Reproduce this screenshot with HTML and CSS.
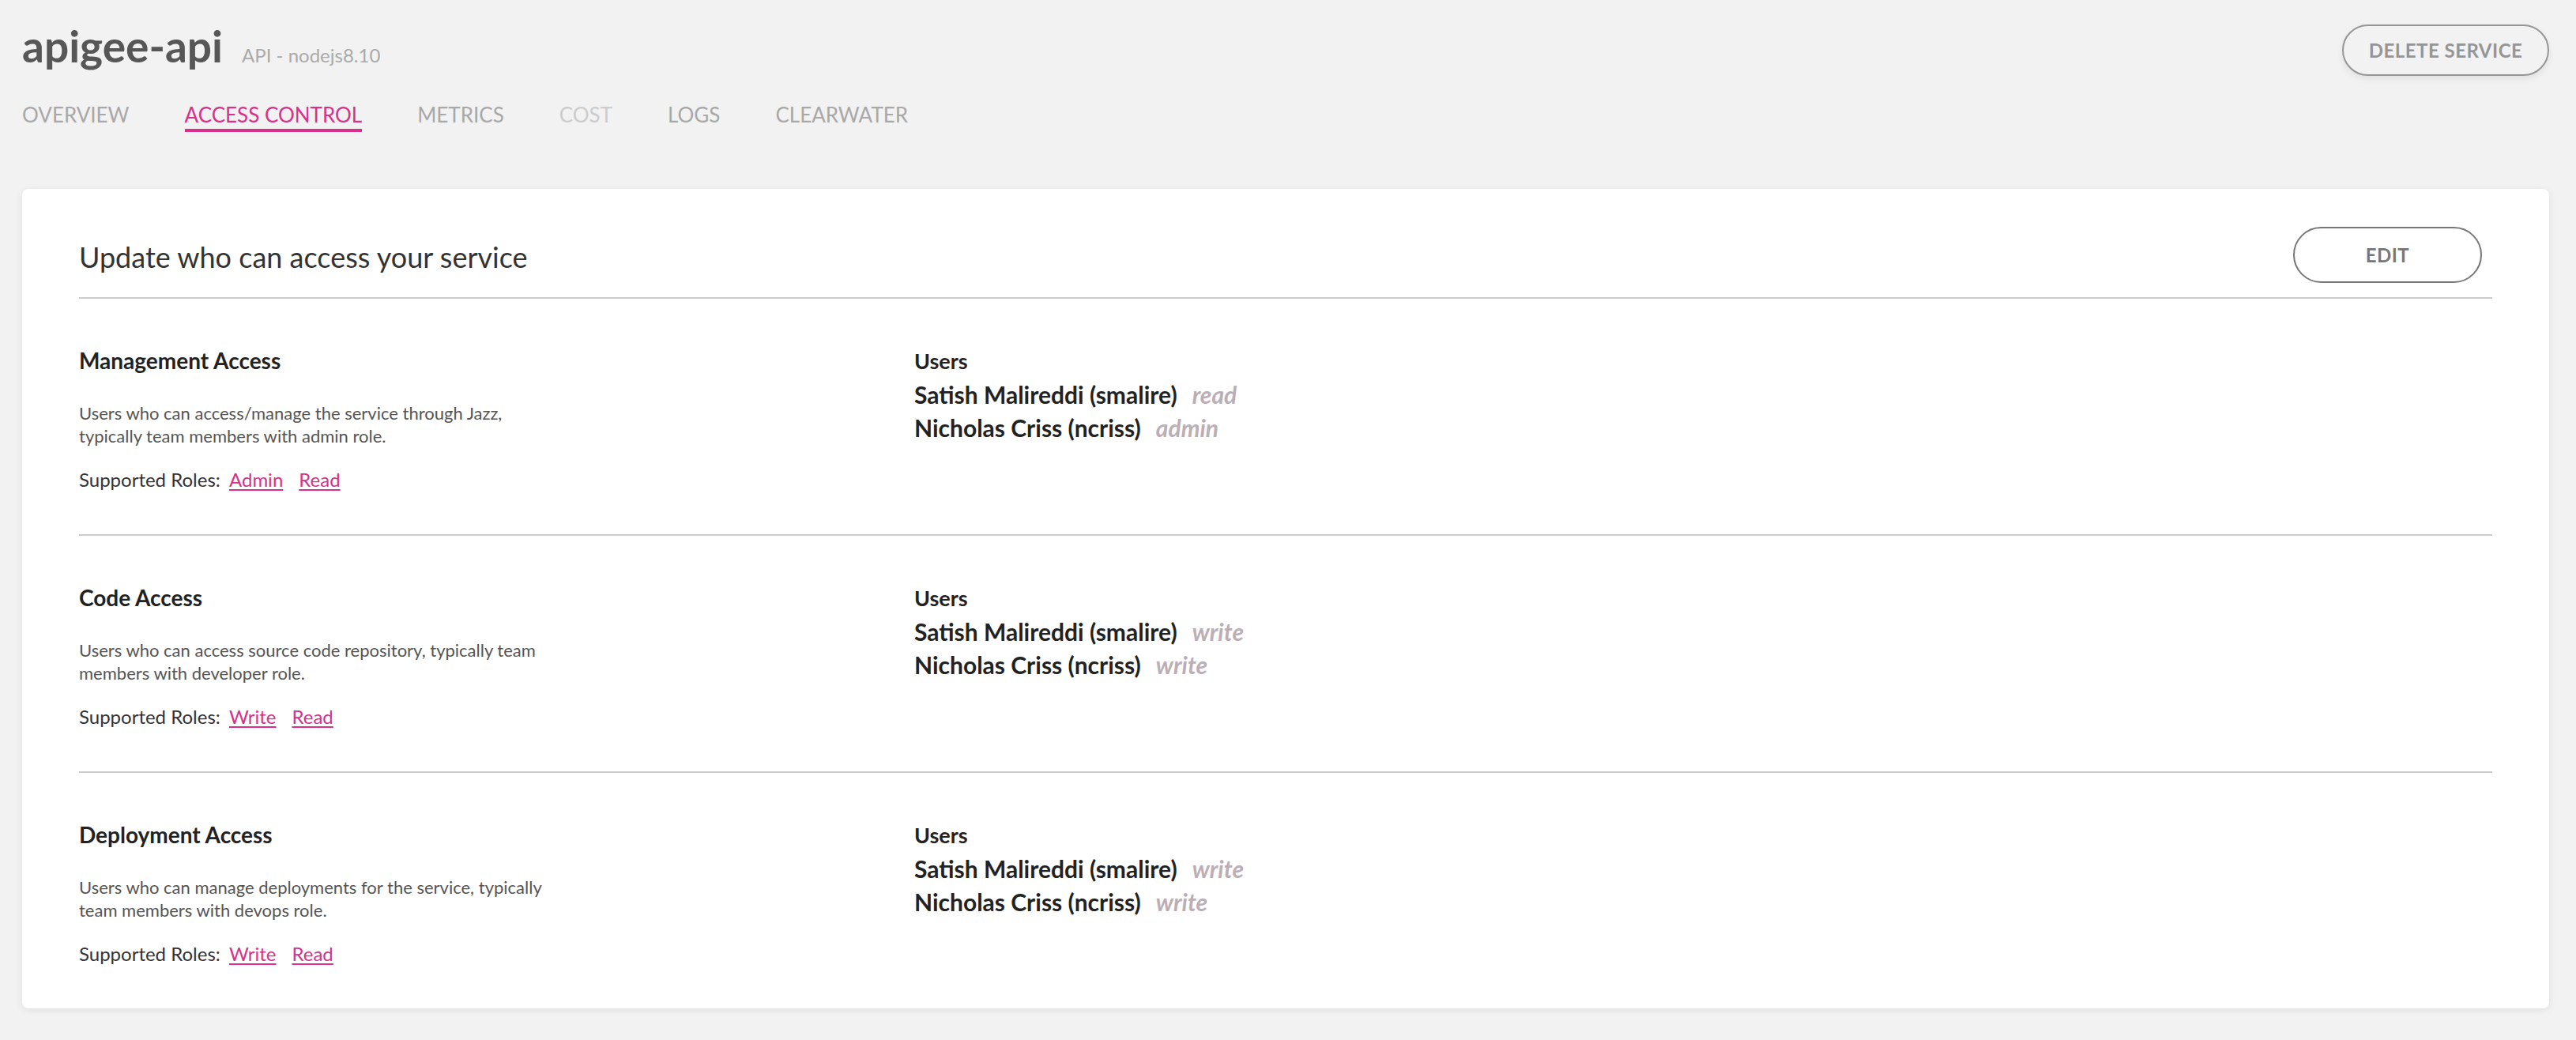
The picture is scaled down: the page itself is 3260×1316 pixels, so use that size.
FILE: index.html
```html
<!DOCTYPE html>
<html lang="en">
<head>
<meta charset="utf-8">
<title>apigee-api - Access Control</title>
<link rel="stylesheet" href="styles.css">
</head>
<body>
<div class="page">
  <header class="top">
    <div class="top-left">
      <div class="title-row">
        <h1 class="title">apigee-api</h1>
        <span class="subtitle">API - nodejs8.10</span>
      </div>
      <nav class="tabs">
        <span class="tab">OVERVIEW</span>
        <span class="tab active">ACCESS CONTROL</span>
        <span class="tab">METRICS</span>
        <span class="tab disabled">COST</span>
        <span class="tab">LOGS</span>
        <span class="tab">CLEARWATER</span>
      </nav>
    </div>
    <button class="btn-delete">DELETE SERVICE</button>
  </header>

  <main class="card">
    <div class="card-head">
      <h2 class="card-title">Update who can access your service</h2>
      <button class="btn-edit">EDIT</button>
    </div>

    <section class="access">
      <div class="access-info">
        <h3 class="access-title">Management Access</h3>
        <p class="access-desc">Users who can access/manage the service through Jazz, typically team members with admin role.</p>
        <p class="roles">Supported Roles: <a class="role-link" href="#">Admin</a><a class="role-link" href="#">Read</a></p>
      </div>
      <div class="users">
        <div class="users-label">Users</div>
        <div class="user">Satish Malireddi (smalire)<span class="user-role">read</span></div>
        <div class="user">Nicholas Criss (ncriss)<span class="user-role">admin</span></div>
      </div>
    </section>

    <section class="access">
      <div class="access-info">
        <h3 class="access-title">Code Access</h3>
        <p class="access-desc">Users who can access source code repository, typically team members with developer role.</p>
        <p class="roles">Supported Roles: <a class="role-link" href="#">Write</a><a class="role-link" href="#">Read</a></p>
      </div>
      <div class="users">
        <div class="users-label">Users</div>
        <div class="user">Satish Malireddi (smalire)<span class="user-role">write</span></div>
        <div class="user">Nicholas Criss (ncriss)<span class="user-role">write</span></div>
      </div>
    </section>

    <section class="access">
      <div class="access-info">
        <h3 class="access-title">Deployment Access</h3>
        <p class="access-desc">Users who can manage deployments for the service, typically team members with devops role.</p>
        <p class="roles">Supported Roles: <a class="role-link" href="#">Write</a><a class="role-link" href="#">Read</a></p>
      </div>
      <div class="users">
        <div class="users-label">Users</div>
        <div class="user">Satish Malireddi (smalire)<span class="user-role">write</span></div>
        <div class="user">Nicholas Criss (ncriss)<span class="user-role">write</span></div>
      </div>
    </section>
  </main>
</div>
</body>
</html>
```
FILE: styles.css
```css
* { box-sizing: border-box; }

html, body {
  margin: 0;
  padding: 0;
  background: #f2f2f2;
  font-family: Lato, "Open Sans", "Liberation Sans", sans-serif;
  color: #333;
}

.page {
  padding: 25px 34px 40px 28px;
}

/* ---------- header ---------- */
.top {
  display: flex;
  justify-content: space-between;
  align-items: flex-start;
}

.title-row {
  display: flex;
  align-items: baseline;
}

.title {
  margin: 0;
  font-size: 55px;
  font-weight: 700;
  line-height: 67px;
  color: #575757;
}

.subtitle {
  margin-left: 24px;
  font-size: 24px;
  color: #aaaaaa;
}

.tabs {
  display: flex;
  gap: 70px;
  margin-top: 38px;
}

.tab {
  font-size: 26px;
  line-height: 1.2;
  color: #a8a8a8;
  padding-bottom: 2px;
  border-bottom: 4px solid transparent;
}

.tab.active {
  color: #d8318b;
  border-bottom-color: #d8318b;
}

.tab.disabled {
  color: #cccccc;
}

.btn-delete {
  margin-top: 6px;
  width: 262px;
  height: 65px;
  border: 2px solid #959595;
  border-radius: 33px;
  background: transparent;
  color: #959595;
  font-family: inherit;
  font-size: 24px;
  font-weight: 700;
  letter-spacing: 0.5px;
  box-shadow: 0 4px 8px rgba(0, 0, 0, 0.07);
  padding: 0;
}

/* ---------- card ---------- */
.card {
  margin-top: 72px;
  background: #ffffff;
  border-radius: 8px;
  box-shadow: 0 2px 10px rgba(0, 0, 0, 0.08);
  padding: 48px 72px 0 72px;
}

.card-head {
  display: flex;
  justify-content: space-between;
  align-items: center;
  padding-bottom: 18px;
  border-bottom: 2px solid #cccccc;
}

.card-title {
  margin: 5px 0 0 0;
  font-size: 36px;
  font-weight: 400;
  line-height: 1.2;
  color: #333333;
}

.btn-edit {
  margin-right: 13px;
  width: 239px;
  height: 71px;
  border: 2px solid #777777;
  border-radius: 36px;
  background: #ffffff;
  color: #777777;
  font-family: inherit;
  font-size: 24px;
  font-weight: 700;
  letter-spacing: 0.5px;
  padding: 0;
}

/* ---------- access sections ---------- */
.access {
  display: grid;
  grid-template-columns: 1057px 1fr;
  padding: 58px 0 53px 0;
  border-bottom: 2px solid #cccccc;
}

.access:last-child {
  border-bottom: none;
}

.access-title {
  margin: 0;
  font-size: 28px;
  font-weight: 700;
  line-height: 40px;
  color: #222222;
}

.access-desc {
  margin: 32px 0 0 0;
  max-width: 610px;
  font-size: 22px;
  line-height: 29px;
  color: #555555;
}

.roles {
  margin: 25px 0 0 0;
  font-size: 24px;
  line-height: 32px;
  color: #333333;
}

.role-link {
  color: #d8318b;
  text-decoration: underline;
  text-decoration-thickness: 2px;
  text-underline-offset: 3px;
  margin-left: 5px;
  margin-right: 15px;
}

.users-label {
  font-size: 27px;
  font-weight: 700;
  line-height: 42px;
  color: #222222;
}

.user {
  font-size: 30px;
  font-weight: 700;
  line-height: 42px;
  color: #222222;
}

.user-role {
  margin-left: 19px;
  font-style: italic;
  color: #bbaeb6;
}
```
